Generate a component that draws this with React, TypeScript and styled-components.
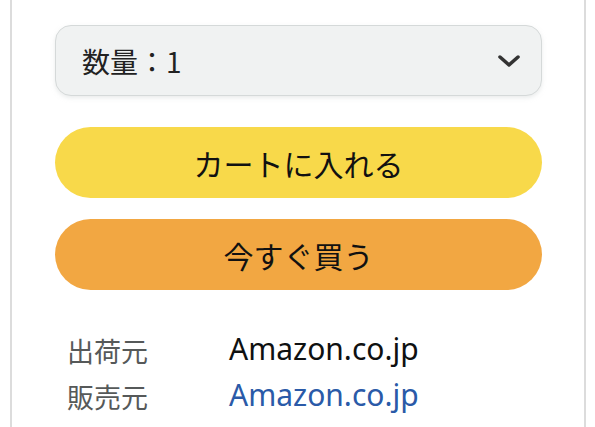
import React from 'react';
import styled, { createGlobalStyle } from 'styled-components';

const GlobalSt = createGlobalStyle`
  html, body {
    margin: 0;
    padding: 0;
    background: #ffffff;
  }
  body {
    font-family: 'Noto Sans', 'Noto Sans CJK JP', sans-serif;
    color: #0f1111;
  }
`;

const PanelSt = styled.div`
  margin-left: 10px;
  width: 576px;
  height: 427px;
  box-sizing: border-box;
  border-left: 2px solid #dcdcdc;
  border-right: 2px solid #dcdcdc;
  padding: 25px 42px 0 43px;
  display: flex;
  flex-direction: column;
  overflow: hidden;
`;

const SelectSt = styled.div`
  height: 71px;
  box-sizing: border-box;
  border: 1.5px solid #d5d9d9;
  border-radius: 16px;
  background: #f0f2f2;
  box-shadow: 0 2px 4px rgba(213, 217, 217, 0.5);
  display: flex;
  align-items: center;
  justify-content: space-between;
  padding: 0 20px 0 26px;
  font-size: 28px;
  font-family: 'Noto Sans CJK JP', sans-serif;
  color: #222;
`;

const ButtonSt = styled.div<{ $bg: string; $mt: number }>`
  margin-top: ${(p) => p.$mt}px;
  height: 71px;
  border-radius: 36px;
  background: ${(p) => p.$bg};
  display: flex;
  align-items: center;
  justify-content: center;
  font-family: 'Noto Sans CJK JP', sans-serif;
  font-size: 30px;
  color: #111;
`;

const InfoSt = styled.div`
  margin-top: 44px;
  display: grid;
  grid-template-columns: 162px 1fr;
  row-gap: 12px;
  padding-left: 12px;
  line-height: 34px;
`;

const LabelSt = styled.span`
  font-family: 'Noto Sans CJK JP', sans-serif;
  font-size: 27px;
  color: #565959;
`;

const ValueSt = styled.span<{ $link?: boolean }>`
  font-family: 'Noto Sans', sans-serif;
  font-size: 30px;
  color: ${(p) => (p.$link ? '#2a5aa8' : '#0f1111')};
  position: relative;
  top: -2px;
`;

export default function App() {
  return (
    <>
      <GlobalSt />
      <PanelSt>
        <SelectSt>
          <span>数量：1</span>
          <svg width='24' height='14' viewBox='0 0 24 14'>
            <path d='M3 3 L12 11 L21 3' fill='none' stroke='#333' strokeWidth='3.5' strokeLinecap='round' strokeLinejoin='round' />
          </svg>
        </SelectSt>
        <ButtonSt $bg='#f8d94a' $mt={31}>カートに入れる</ButtonSt>
        <ButtonSt $bg='#f2a742' $mt={21}>今すぐ買う</ButtonSt>
        <InfoSt>
          <LabelSt>出荷元</LabelSt>
          <ValueSt>Amazon.co.jp</ValueSt>
          <LabelSt>販売元</LabelSt>
          <ValueSt $link>Amazon.co.jp</ValueSt>
        </InfoSt>
      </PanelSt>
    </>
  );
}
